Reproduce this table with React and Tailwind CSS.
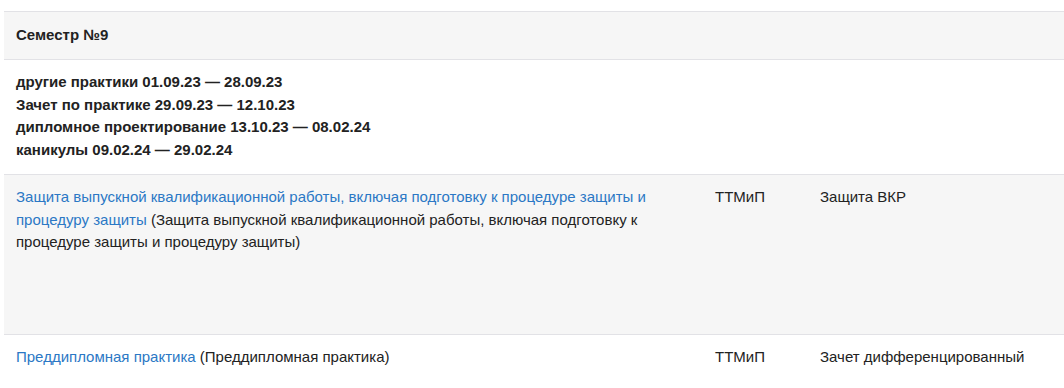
import React from 'react';

const periods = [
    'другие практики 01.09.23 — 28.09.23',
    'Зачет по практике 29.09.23 — 12.10.23',
    'дипломное проектирование 13.10.23 — 08.02.24',
    'каникулы 09.02.24 — 29.02.24',
];

const subjects = [
    {
        id: 1,
        name: 'Защита выпускной квалификационной работы, включая подготовку к процедуре защиты и процедуру защиты',
        full: 'Защита выпускной квалификационной работы, включая подготовку к процедуре защиты и процедуру защиты',
        dept: 'ТТМиП',
        control: 'Защита ВКР',
        rowClass: 'bg-[#f6f6f6] h-[160px]',
    },
    {
        id: 2,
        name: 'Преддипломная практика',
        full: 'Преддипломная практика',
        dept: 'ТТМиП',
        control: 'Зачет дифференцированный',
        rowClass: 'bg-white',
    },
];

const App = () => {
    return (
        <div className="w-[1064px] h-[388px] overflow-hidden bg-white pt-[11px] pl-[4px] font-['Liberation_Sans',Arial,sans-serif] text-[15px] leading-[1.5] text-[#222]">
            <table className="w-[1120px] border-collapse">
                <colgroup>
                    <col className="w-[699px]" />
                    <col className="w-[105px]" />
                    <col />
                </colgroup>
                <tbody>
                    <tr className="bg-[#f6f6f6] border-t border-[#e2e2e6]">
                        <td colSpan={3} className="px-3 pt-3 pb-[12.5px] font-bold">
                            Семестр №9
                        </td>
                    </tr>
                    <tr className="bg-white border-t border-[#e2e2e6]">
                        <td colSpan={3} className="px-3 pt-[11px] pb-[13px] font-bold">
                            {periods.map((p) => (
                                <div key={p}>{p}</div>
                            ))}
                        </td>
                    </tr>
                    {subjects.map((s) => (
                        <tr key={s.id} className={`border-t border-[#e2e2e6] align-top ${s.rowClass}`}>
                            <td className="px-3 py-[11px]">
                                <a href="#" className="text-[#2b78c5]">{s.name}</a> ({s.full})
                            </td>
                            <td className="px-3 py-[11px]">{s.dept}</td>
                            <td className="px-3 py-[11px]">{s.control}</td>
                        </tr>
                    ))}
                </tbody>
            </table>
        </div>
    );
};

export default App;
